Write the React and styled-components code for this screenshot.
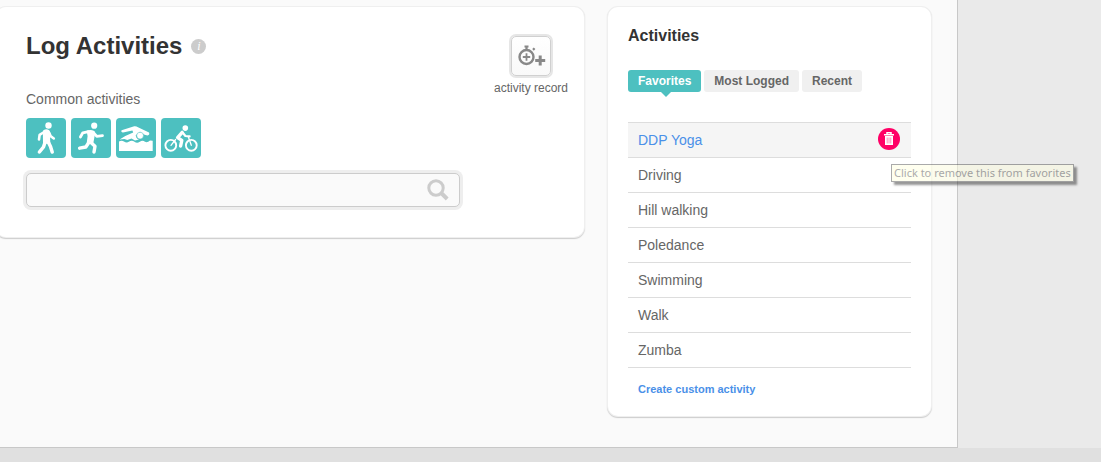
import React, {useState} from "react";
import styled, {createGlobalStyle} from "styled-components";

const GlobalStyle = createGlobalStyle`
  * {
    box-sizing: border-box;
  }

  body {
    margin: 0;
    background: #ffffff;
    color: #666666;
    font-family: "Liberation Sans", Arial, sans-serif;
    font-size: 14px;
  }

  button, input {
    font-family: inherit;
  }
`

const Page = styled.div`
  margin-right: 5px;
  padding-right: 143px;
  background: #eaeaea;
  overflow: hidden;
`

const Content = styled.main`
  display: flex;
  align-items: flex-start;
  gap: 24px;
  padding: 7px 26px 31px 0;
  background: #fafafa;
  border: 1px solid #c8c8c8;
  border-top: none;
  border-left: none;
`

const Footer = styled.footer`
  height: 14px;
  margin-right: 5px;
  background: #e0e0e0;
`

const Card = styled.section`
  background: #ffffff;
  border-radius: 10px;
  box-shadow: 0 0 0 1px #efefef, 0 1px 1px 1px #cccccc;
`

const LogCard = styled(Card)`
  flex: 1;
  min-width: 0;
  margin-left: -4px;
  padding: 24px 16px 30px 30px;
`

const LogHeader = styled.div`
  display: flex;
  justify-content: space-between;
  align-items: flex-start;
`

const Title = styled.h1`
  display: flex;
  align-items: center;
  gap: 9px;
  margin: 0;
  color: #333333;
  font-size: 24px;
  line-height: 30px;
`

const InfoBadge = styled.span`
  width: 15px;
  height: 15px;
  border-radius: 50%;
  background: #cccccc;
  color: #ffffff;
  font-family: "Liberation Serif", serif;
  font-size: 12px;
  font-style: italic;
  font-weight: normal;
  line-height: 15px;
  text-align: center;
`

const Label = styled.label`
  display: block;
  margin-top: 30px;
  line-height: 16px;
`

const RecordColumn = styled.div`
  display: flex;
  flex-direction: column;
  align-items: center;
  gap: 5px;
  padding-top: 5px;
  font-size: 12px;
  line-height: 14px;
`

const RecordButton = styled.button`
  display: grid;
  place-items: center;
  width: 40px;
  height: 40px;
  padding: 0;
  border: 1px solid #d0d0d0;
  border-radius: 5px;
  background: linear-gradient(#ffffff, #f9f9f9);
  box-shadow: 0 0 0 2px #e6e6e6;
`

const ActivityButtons = styled.div`
  display: flex;
  gap: 5px;
  margin: 11px 0 15px;
`

const ActivityButton = styled.button`
  width: 40px;
  height: 40px;
  padding: 0;
  border: none;
  border-radius: 4px;
  background: #4dc0c0;

  svg {
    display: block;
  }
`

const SearchBox = styled.div`
  display: flex;
  align-items: center;
  max-width: 434px;
  height: 34px;
  padding-right: 10px;
  border: 1px solid #cccccc;
  border-radius: 5px;
  background: #fafafa;
  box-shadow: 0 0 0 3px #eeeeee;
`

const SearchInput = styled.input`
  flex: 1;
  min-width: 0;
  height: 100%;
  padding: 0 10px;
  border: none;
  outline: none;
  background: transparent;
  font-size: 14px;
`

const SearchButton = styled.button`
  display: flex;
  padding: 0;
  border: none;
  background: none;
`

const Sidebar = styled(Card)`
  flex: 0 0 323px;
  padding: 20px;
`

const SidebarTitle = styled.h2`
  margin: 0;
  color: #333333;
  font-size: 16px;
  line-height: 18px;
`

const Tabs = styled.div`
  display: flex;
  gap: 3px;
  margin: 25px 0 30px;
`

const Tab = styled.button`
  position: relative;
  height: 22px;
  padding: 0 10px;
  border: none;
  border-radius: 3px;
  background: ${props => props.$active ? "#4dc0c0" : "#f0f0f0"};
  color: ${props => props.$active ? "#ffffff" : "#666666"};
  font-size: 12px;
  font-weight: bold;
  line-height: 22px;
  white-space: nowrap;

  &::after {
    content: "";
    display: ${props => props.$active ? "block" : "none"};
    position: absolute;
    top: 100%;
    left: 50%;
    margin-left: -4px;
    border: 5px solid transparent;
    border-top-color: #4dc0c0;
    border-bottom: none;
  }
`

const ActivityList = styled.ul`
  margin: 0;
  padding: 0;
  list-style: none;
  border-top: 1px solid #dddddd;
`

const ActivityRow = styled.li`
  display: flex;
  align-items: center;
  justify-content: space-between;
  height: 35px;
  padding: 0 11px 0 10px;
  border-bottom: 1px solid #dddddd;
  background: ${props => props.$selected ? "#f5f5f5" : "#ffffff"};
`

const ActivityLink = styled.a`
  color: ${props => props.$selected ? "#4a90e8" : "#666666"};
  text-decoration: none;
`

const RemoveWrapper = styled.div`
  position: relative;
  margin-bottom: 2px;
`

const RemoveButton = styled.button`
  display: grid;
  place-items: center;
  width: 22px;
  height: 22px;
  padding: 0;
  border: none;
  border-radius: 50%;
  background: #ff0066;
`

const Tooltip = styled.span`
  position: absolute;
  z-index: 1;
  top: 36px;
  left: 13px;
  padding: 0 2px;
  border: 1px solid #575757;
  background: #ffffe1;
  box-shadow: 3px 3px 2px #333333;
  color: #575757;
  font-family: "Noto Sans", "Open Sans", sans-serif;
  font-size: 11px;
  line-height: 16px;
  white-space: nowrap;
  opacity: 0.5;
`

const CreateLink = styled.a`
  display: block;
  margin: 14px 10px 0;
  color: #4a90e8;
  font-size: 11px;
  font-weight: bold;
  line-height: 14px;
  text-decoration: none;
`

const figure = {
    fill: "none",
    stroke: "#ffffff",
    strokeLinecap: "round",
    strokeLinejoin: "round",
}

const WalkIcon = () => (
    <svg width="40" height="40" viewBox="0 0 40 40" {...figure}>
        <circle cx="22.5" cy="7.5" r="3.2" fill="#fff" stroke="none"/>
        <path d="M17.8 12.8Q20.5 11.3 22.8 12.8L24 16 23.4 20.5 23.6 25H17.7L17.6 18Z" fill="#fff" strokeWidth="1.4"/>
        <path d="M18.2 14L13.6 16.8 13 21.5M23 14.5L24.8 18.2 27.8 20.5" strokeWidth="2.6"/>
        <path d="M19.3 23.5L17.5 29 13.4 34M22 23.5L24.5 28.5 26.2 34" strokeWidth="3.5"/>
    </svg>
)

const RunIcon = () => (
    <svg width="40" height="40" viewBox="0 0 40 40" {...figure}>
        <circle cx="23.2" cy="7.7" r="3.1" fill="#fff" stroke="none"/>
        <path d="M16.5 13.2Q20 12 22.8 13.7L22.8 18 21.6 24.5 16.6 24.5 17.4 18Z" fill="#fff" strokeWidth="1.6"/>
        <path d="M17.5 13.6L11.8 14.8 9.4 19M22.5 14.6L25.8 18.4 31.5 17.6" strokeWidth="2.8"/>
        <path d="M18 24.2L14.8 29 8.6 30.2M19.6 24.2L24 28.2 23 34" strokeWidth="3.4"/>
    </svg>
)

const SwimIcon = () => (
    <svg width="40" height="40" viewBox="0 0 40 40" fill="#ffffff">
        <path d="M5.6 12.3L18.2 8.3Q20.2 8 22 9.2L33 14.6Q34 17 31.5 17.5L28.6 16.8 24 13.8 19.7 17.2Q20 20.5 23 21.6L19 22.4 15.5 20.5 11.3 22 8.4 21 3.6 21.6Q9.3 17.6 17.2 14.6L16.4 12.6 7 14.6Q4.6 14.2 5.6 12.3Z"/>
        <circle cx="24.1" cy="17.6" r="3.4" stroke="#4dc0c0" strokeWidth=".5"/>
        <path d="M3 23.6Q5.5 21.8 8 23.4Q10.5 25.6 13.2 23.6Q15.8 21.8 18.5 23.8Q21 25.6 23.8 23.8Q26.5 21.8 29 23.8Q31.3 25 34 22.6L36.7 22.8V33H3Z"/>
    </svg>
)

const CycleIcon = () => (
    <svg width="40" height="40" viewBox="0 0 40 40" {...figure}>
        <circle cx="9.8" cy="27.3" r="5.4" strokeWidth="1.9"/>
        <circle cx="30.3" cy="27.3" r="5.4" strokeWidth="1.9"/>
        <circle cx="24.3" cy="10.1" r="2.8" fill="#fff" stroke="none"/>
        <path d="M27.2 18.5L30.3 27.3M10 27.3L14.6 21.5" strokeWidth="1.3"/>
        <path d="M21.2 14.4L16.6 19.6 20.8 22.4 19.6 28" strokeWidth="3.4"/>
        <path d="M22 15L24.4 18 28.6 18.3" strokeWidth="2.2"/>
    </svg>
)

const StopwatchIcon = () => (
    <svg width="30" height="24" viewBox="0 0 30 24" fill="none" stroke="#888888">
        <circle cx="10.5" cy="13" r="7" strokeWidth="2.4"/>
        <path d="M10.5 9.2V16.8M6.8 13H14.2" strokeWidth="1.8"/>
        <path d="M8.5 2.5H12.5M10.5 3V6M17 4.3L18.6 5.9" strokeWidth="2.2"/>
        <path d="M24.2 11.5V21.5M19.2 16.5H29.2" strokeWidth="3"/>
    </svg>
)

const SearchIcon = () => (
    <svg width="22" height="22" viewBox="0 0 22 22" fill="none" stroke="#cccccc">
        <circle cx="9" cy="9" r="7.2" strokeWidth="3"/>
        <path d="M14.2 14L20.2 20" strokeWidth="4"/>
    </svg>
)

const TrashIcon = () => (
    <svg width="12" height="14" viewBox="0 0 12 14" fill="none" stroke="#ffffff">
        <path d="M4 2V.7H8V2M1 2.8H11" strokeWidth="1.5"/>
        <path d="M2 4H10V13H2Z" fill="#ffffff" stroke="none"/>
        <path d="M4.2 5.5V11.5M6 5.5V11.5M7.8 5.5V11.5" stroke="#ff80b2" strokeWidth=".9"/>
    </svg>
)

const commonActivities = [
    {name: "Walk", Icon: WalkIcon},
    {name: "Run", Icon: RunIcon},
    {name: "Swim", Icon: SwimIcon},
    {name: "Cycle", Icon: CycleIcon},
]

const tabs = ["Favorites", "Most Logged", "Recent"]

const favorites = ["DDP Yoga", "Driving", "Hill walking", "Poledance", "Swimming", "Walk", "Zumba"]

function LogActivities() {
    return (
        <LogCard>
            <LogHeader>
                <div>
                    <Title>
                        Log Activities
                        <InfoBadge>i</InfoBadge>
                    </Title>
                    <Label htmlFor="activity-search">Common activities</Label>
                </div>
                <RecordColumn>
                    <RecordButton type="button" aria-labelledby="record-label">
                        <StopwatchIcon/>
                    </RecordButton>
                    <span id="record-label">activity record</span>
                </RecordColumn>
            </LogHeader>
            <ActivityButtons>
                {commonActivities.map(({name, Icon}) => (
                    <ActivityButton key={name} type="button" aria-label={name}>
                        <Icon/>
                    </ActivityButton>
                ))}
            </ActivityButtons>
            <SearchBox>
                <SearchInput id="activity-search" type="text"/>
                <SearchButton type="button" aria-label="Search">
                    <SearchIcon/>
                </SearchButton>
            </SearchBox>
        </LogCard>
    )
}

function Favorite({name, selected}) {
    return (
        <ActivityRow $selected={selected}>
            <ActivityLink href="#" $selected={selected}>{name}</ActivityLink>
            {selected && (
                <RemoveWrapper>
                    <RemoveButton type="button" aria-describedby="remove-tip" aria-label={`Remove ${name}`}>
                        <TrashIcon/>
                    </RemoveButton>
                    <Tooltip id="remove-tip" role="tooltip">Click to remove this from favorites</Tooltip>
                </RemoveWrapper>
            )}
        </ActivityRow>
    )
}

function ActivitiesSidebar() {
    const [tab, setTab] = useState("Favorites")
    return (
        <Sidebar>
            <SidebarTitle>Activities</SidebarTitle>
            <Tabs role="tablist">
                {tabs.map(t => (
                    <Tab
                        key={t}
                        type="button"
                        role="tab"
                        aria-selected={t === tab}
                        $active={t === tab}
                        onClick={() => setTab(t)}>
                        {t}
                    </Tab>
                ))}
            </Tabs>
            <ActivityList>
                {favorites.map((name, i) => <Favorite key={name} name={name} selected={i === 0}/>)}
            </ActivityList>
            <CreateLink href="#">Create custom activity</CreateLink>
        </Sidebar>
    )
}

export default function App() {
    return (
        <>
            <GlobalStyle/>
            <Page>
                <Content>
                    <LogActivities/>
                    <ActivitiesSidebar/>
                </Content>
            </Page>
            <Footer/>
        </>
    )
}
